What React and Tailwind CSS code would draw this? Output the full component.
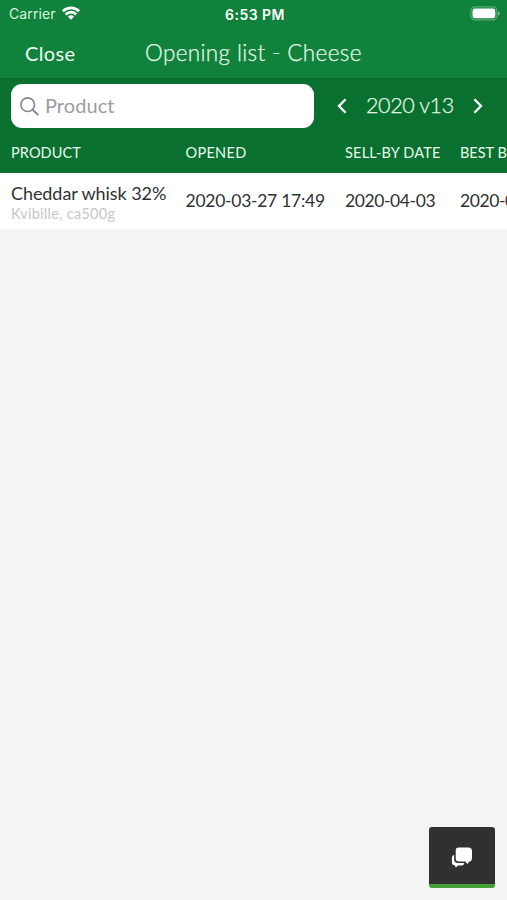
import React from "react";

function StatusBar() {
  return (
    <div className="grid h-7 grid-cols-[1fr_auto_1fr] items-center pl-[9px] pr-[7px] font-['Inter',sans-serif] text-white">
      <div className="flex items-center gap-[6px]">
        <span className="text-[14px] leading-[20px] tracking-[0.1px] text-[#d9f5de]">Carrier</span>
        <svg className="-mt-[2px]" width="18" height="14" viewBox="0 0 18 14" fill="none" stroke="white" strokeWidth="2.7">
          <path d="M0.9 5.2C5.4 0.7 12.6 0.7 17.1 5.2" />
          <path d="M3.7 8.5C6.8 5.4 11.2 5.4 14.3 8.5" />
          <path d="M5.9 10.5C7.7 8.9 10.3 8.9 12.1 10.5L9 13.7Z" fill="white" stroke="none" />
        </svg>
      </div>
      <span className="-mr-px text-[14px] font-semibold tracking-[0.45px]">6:53 PM</span>
      <svg className="-mt-[2px] justify-self-end" width="30" height="15" viewBox="0 0 30 15">
        <rect x="0.9" y="0.9" width="26" height="13" rx="4" fill="none" stroke="#58aa70" strokeWidth="1.2" />
        <rect x="2.5" y="2.6" width="22.8" height="9.6" rx="2.3" fill="white" />
        <path d="M28 5.2C30.2 5.9 30.2 8.9 28 9.6Z" fill="#7fbf92" />
      </svg>
    </div>
  );
}

function Chevron({ d }) {
  return (
    <svg width="10" height="16" viewBox="0 0 10 16" fill="none" stroke="white" strokeWidth="2.3">
      <path d={d} />
    </svg>
  );
}

export default function App() {
  return (
    <div className="flex h-[900px] w-[507px] flex-col overflow-hidden bg-[#f4f4f4] font-['Lato',sans-serif]">
      <header className="h-[78px] shrink-0 bg-[#10823b]">
        <StatusBar />
        <div className="flex h-[50px] items-center pl-[25px] whitespace-nowrap">
          <span className="w-[120px] text-[20px] leading-[50px] tracking-[0.35px] text-[#effcf0]">Close</span>
          <h1 className="text-[22.5px] leading-[48px] font-light tracking-[0.36px] text-[#e4f8e7] [-webkit-text-stroke:0.25px_#e4f8e7]">Opening list - Cheese</h1>
        </div>
      </header>

      <section className="h-[95px] shrink-0 border-t border-[#0a6a2e] bg-[#0a7030] pt-[5px]">
        <div className="flex h-[44px] items-center pl-[11px]">
          <div className="flex h-[44px] w-[303px] items-center rounded-[11px] bg-white pl-[9px]">
            <svg width="19" height="19" viewBox="0 0 19 19" fill="none" stroke="#85898a" strokeWidth="1.6">
              <circle cx="7.7" cy="7.7" r="6.8" />
              <path d="M12.7 12.7L18.3 18.1" strokeWidth="2" />
            </svg>
            <span className="ml-[6px] pb-[2px] text-[20px] tracking-[0.05px] text-[#9a9d9d]">Product</span>
          </div>
          <div className="ml-[23px] flex items-center">
            <Chevron d="M8.6 1.2L2 8L8.6 14.8" />
            <span className="ml-[19px] w-[87px] pb-px text-[21.5px] font-light tracking-[-0.4px] whitespace-nowrap text-[#e1f8e4] [-webkit-text-stroke:0.25px_#e1f8e4]">2020 v13</span>
            <span className="ml-[20px]">
              <Chevron d="M1.4 1.2L8 8L1.4 14.8" />
            </span>
          </div>
        </div>
        <div className="grid h-[45px] grid-cols-[174.5px_159.5px_115px_80px] items-center pt-[4px] pl-[11px] text-[14.5px] whitespace-nowrap text-[#e8faeb]">
          <span className="tracking-[0.1px]">PRODUCT</span>
          <span className="tracking-[0.3px]">OPENED</span>
          <span className="tracking-[0.2px]">SELL-BY DATE</span>
          <span>BEST BEFORE</span>
        </div>
      </section>

      <div className="grid h-[56px] shrink-0 grid-cols-[174.5px_159.5px_115px_100px] items-center bg-white pl-[11px] text-[17.5px] tracking-[-0.27px] whitespace-nowrap text-[#303233]">
        <div className="pt-[3px]">
          <div className="text-[18px] leading-[22px] tracking-[-0.07px]">Cheddar whisk 32%</div>
          <div className="text-[14.5px] leading-[19px] tracking-[0.28px] text-[#c5c7c8]">Kvibille, ca500g</div>
        </div>
        <span>2020-03-27 17:49</span>
        <span className="tracking-[-0.4px]">2020-04-03</span>
        <span className="tracking-[-0.4px]">2020-05-10</span>
      </div>

      <main className="flex grow items-end justify-end pr-[12px] pb-[12px]">
        <button className="flex h-[61px] w-[66px] items-center justify-center rounded-[3px] border-b-4 border-[#43a038] bg-[#303030] pt-[3px]" aria-label="Chat">
          <svg width="22" height="21" viewBox="0 0 22 21" fill="white">
            <path d="M7.7 0.5H17.3Q21 0.5 21 4.2V10.8Q21 14.3 18.3 14.5L16.3 17L14.3 14.5H7.9Q4.7 14.5 4.7 11.3V3.5Q4.7 0.5 7.7 0.5Z" />
            <path d="M3.1 8.1V12.2Q3.1 16 6.9 16H13.2Q13.2 18.4 10.6 18.4H6.9L4.8 20.4L3.7 18.3Q0.9 18.1 0.9 15.2V10.7Q0.9 8.4 3.1 8.1Z" />
          </svg>
        </button>
      </main>
    </div>
  );
}
